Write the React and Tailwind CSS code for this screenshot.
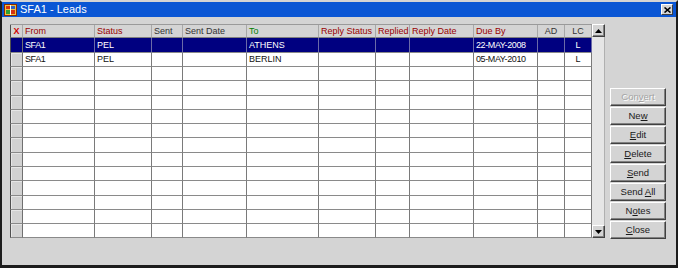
import React from "react";

const cols = [
  { w: "w-[13px]" },
  { w: "w-[72px]", label: "From", c: "text-[#990000]" },
  { w: "w-[57px]", label: "Status", c: "text-[#990000]" },
  { w: "w-[31px]", label: "Sent", c: "text-[#333333]" },
  { w: "w-[64px]", label: "Sent Date", c: "text-[#333333]" },
  { w: "w-[72px]", label: "To", c: "text-[#008000]" },
  { w: "w-[57px]", label: "Reply Status", c: "text-[#990000]" },
  { w: "w-[34px]", label: "Replied", c: "text-[#990000]" },
  { w: "w-[64px]", label: "Reply Date", c: "text-[#990000]" },
  { w: "w-[64px]", label: "Due By", c: "text-[#990000]" },
  { w: "w-[27px]", label: "AD", c: "text-[#333333]", center: true },
  { w: "w-[27px]", label: "LC", c: "text-[#333333]", center: true },
];

const data = [
  ["SFA1", "PEL", "", "", "ATHENS", "", "", "", "22-MAY-2008", "", "L"],
  ["SFA1", "PEL", "", "", "BERLIN", "", "", "", "05-MAY-2010", "", "L"],
];

const heights = ["h-[15px]", "h-[14px]", "h-[14px]", "h-[15px]", "h-[14px]", "h-[14px]", "h-[14px]", "h-[15px]", "h-[14px]", "h-[14px]", "h-[15px]", "h-[14px]", "h-[14px]", "h-[14px]"];

function Btn({ children, disabled }) {
  return (
    <div
      className={`h-[18px] w-[56px] flex items-center justify-center border border-t-white border-l-white border-b-[#404040] border-r-[#404040] shadow-[inset_-1px_-1px_0_#808080] bg-[#d4d4d4] text-[9.5px] ${
        disabled ? "text-[#a4a4a4] [text-shadow:1px_1px_0_#ffffff]" : "text-[#1a1a1a]"
      }`}
    >
      {children}
    </div>
  );
}

function ScrollBtn({ up }) {
  return (
    <div className="w-[13px] h-[13px] flex items-center justify-center bg-[#d4d4d4] border border-t-white border-l-white border-b-[#404040] border-r-[#404040] shadow-[inset_-1px_-1px_0_#808080]">
      <svg width="7" height="4" viewBox="0 0 7 4">
        {up ? <polygon points="0,4 7,4 3.5,0" fill="#000" /> : <polygon points="0,0 7,0 3.5,4" fill="#000" />}
      </svg>
    </div>
  );
}

export default function App() {
  return (
    <div className="w-[678px] h-[268px] flex flex-col bg-[#d4d4d4] border-t-2 border-t-[#d4d4d4] border-x-2 border-x-[#1c1c1c] border-b-[3px] border-b-[#1c1c1c] font-['Liberation_Sans',Arial,sans-serif] overflow-hidden">
      {/* Title bar */}
      <div className="h-[15px] bg-[#0a56d4] flex items-center pl-[2px] pr-[2px]">
        <svg width="13" height="12" viewBox="0 0 13 12">
          <rect x="0" y="0" width="13" height="12" fill="#f0c040" />
          <rect x="0.5" y="0.5" width="12" height="11" fill="none" stroke="#8a2a00" />
          <rect x="2" y="2" width="4" height="3" fill="#d83010" />
          <rect x="7" y="2" width="4" height="3" fill="#3060c0" />
          <rect x="2" y="6" width="4" height="4" fill="#30a030" />
          <rect x="7" y="6" width="4" height="4" fill="#d83010" />
          <line x1="6.5" y1="1" x2="6.5" y2="11" stroke="#ffffff" />
        </svg>
        <span className="ml-[3px] text-white text-[11px] leading-none">SFA1 - Leads</span>
        <div className="flex-1" />
        <div className="w-[12px] h-[11px] bg-[#d4d4d4] border border-t-white border-l-white border-b-[#404040] border-r-[#404040] flex items-center justify-center mr-[1px]">
          <svg width="7" height="6" viewBox="0 0 7 6">
            <path d="M0.5 0.5 L6.5 5.5 M6.5 0.5 L0.5 5.5" stroke="#000" strokeWidth="1.6" />
          </svg>
        </div>
      </div>

      {/* Body */}
      <div className="flex flex-1 pt-[7px] pl-[8px]">
        {/* Table */}
        <div className="w-[582px] flex flex-col text-[9px] leading-none">
          <div className="flex border-t border-t-[#9a9a9a] h-[14px]">
            {cols.map((c, i) => (
              <div
                key={i}
                className={`${c.w} h-full flex items-center border-r border-b border-r-[#a8a8a8] border-b-[#808080] bg-[#d4d4d4] ${
                  i === 0 ? "border-l border-l-[#505050] justify-center" : c.center ? "justify-center" : "pl-[2px]"
                } ${c.c || ""} whitespace-nowrap overflow-hidden`}
              >
                {i === 0 ? <span className="text-[#d00000] font-bold text-[9px]">X</span> : c.label}
              </div>
            ))}
          </div>
          {heights.map((h, r) => {
            const row = data[r];
            const sel = r === 0;
            return (
              <div key={r} className={`flex ${h} ${sel ? "bg-[#000080] text-white" : "text-[#111111]"}`}>
                {cols.map((c, i) => {
                  if (i === 0) {
                    return (
                      <div
                        key={i}
                        className={`${c.w} h-full border-l border-l-[#505050] border-r border-r-[#707070] border-b border-b-[#8a8a8a] ${
                          sel ? "bg-[#000080]" : "bg-[#d2d2d2] shadow-[inset_1px_1px_0_#e6e6e6]"
                        }`}
                      />
                    );
                  }
                  const v = row ? row[i - 1] : "";
                  const tight = v === "SFA1" || /\d{4}/.test(v);
                  return (
                    <div
                      key={i}
                      className={`${c.w} h-full flex items-center border-r border-b ${
                        sel ? "border-r-[#6a6aa8] border-b-[#8a8a8a]" : "border-r-[#7a7a7a] border-b-[#8a8a8a] bg-white"
                      } ${c.center ? "justify-center" : "pl-[2px]"} whitespace-nowrap overflow-hidden ${
                        tight ? "tracking-[-0.4px]" : ""
                      }`}
                    >
                      {v}
                    </div>
                  );
                })}
              </div>
            );
          })}
        </div>

        {/* Scrollbar */}
        <div className="w-[13px] h-[214px] flex flex-col bg-[#e6e6e6] border-r border-r-[#b0b0b0]">
          <ScrollBtn up />
          <div className="flex-1" />
          <ScrollBtn />
        </div>

        {/* Buttons */}
        <div className="ml-[5px] mt-[64px] flex flex-col gap-[1px]">
          <Btn disabled>
            <span>
              Con<span className="underline">v</span>ert
            </span>
          </Btn>
          <Btn>
            <span>
              Ne<span className="underline">w</span>
            </span>
          </Btn>
          <Btn>
            <span>
              <span className="underline">E</span>dit
            </span>
          </Btn>
          <Btn>
            <span>
              <span className="underline">D</span>elete
            </span>
          </Btn>
          <Btn>
            <span>
              <span className="underline">S</span>end
            </span>
          </Btn>
          <Btn>
            <span>
              Send <span className="underline">A</span>ll
            </span>
          </Btn>
          <Btn>
            <span>
              N<span className="underline">o</span>tes
            </span>
          </Btn>
          <Btn>
            <span>
              <span className="underline">C</span>lose
            </span>
          </Btn>
        </div>
      </div>
    </div>
  );
}
